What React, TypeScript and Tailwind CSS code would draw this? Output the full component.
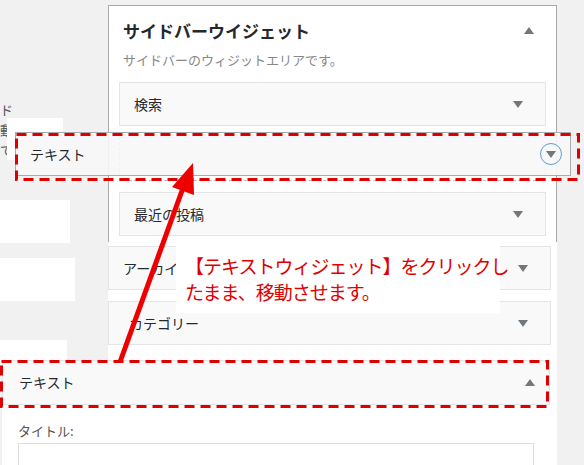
const font = { fontFamily: '"Noto Sans CJK JP", "Noto Sans", sans-serif' };

const Tri = ({ up }: { up?: boolean }) => (
  <svg width="10" height="7" viewBox="0 0 10 7" className="shrink-0">
    <path d={up ? "M0 7 L5 0 L10 7 Z" : "M0 0 L10 0 L5 7 Z"} fill="#72777c" />
  </svg>
);

const Row = ({ label, className = "" }: { label: string; className?: string }) => (
  <div className={`h-[44px] border border-[#e5e5e5] bg-[#f9f9f9] flex items-center justify-between pl-[14px] pr-[22px] text-[14px] text-[#23282d] ${className}`}>
    <span>{label}</span>
    <Tri />
  </div>
);

export default function App() {
  return (
    <div className="relative w-[584px] h-[465px] overflow-hidden bg-[#f1f1f1]" style={font}>
      <div className="flex h-full">
        {/* left column fragments */}
        <div className="w-[108px] shrink-0 relative">
          <div className="absolute left-0 top-[100px] text-[13px] leading-[20px] text-[#555]">
            <div>ド</div><div>動</div><div>て</div>
          </div>
          <div className="absolute left-[7px] top-[118px] w-[56px] h-[42px] bg-white" />
          <div className="absolute left-0 top-[200px] w-[70px] h-[43px] bg-white" />
          <div className="absolute left-0 top-[258px] w-[75px] h-[43px] bg-white" />
          <div className="absolute left-0 top-[340px] w-[67px] h-[30px] bg-white" />
        </div>
        {/* sidebar panel */}
        <div className="w-[449px] mt-[5px] flex flex-col">
          <div className="border border-[#aaa] border-b-0 bg-white px-[10px] pb-[6px]">
            <div className="flex items-center justify-between pl-[4px] pr-[12px] pt-[12px]">
              <span className="text-[17px] font-bold text-[#23282d]">サイドバーウイジェット</span>
              <Tri up />
            </div>
            <div className="pl-[4px] mt-[6px] text-[13px] text-[#888]">サイドバーのウィジットエリアです。</div>
            <Row label="検索" className="mt-[13px]" />
            <div className="h-[44px] my-[11px] border border-dashed border-[#bbb]" />
            <Row label="最近の投稿" />
          </div>
          <div className="bg-white flex-1 pt-[4px] pr-[6px]">
            <Row label="アーカイブ" />
            <Row label="カテゴリー" className="mt-[11px] pl-[20px]" />
          </div>
        </div>
      </div>

      {/* dragged widget */}
      <div className="absolute left-[15px] top-[132px] w-[556px] h-[44px] border border-[#aaa] bg-[#f7f7f7]/90 flex items-center justify-between pl-[14px] pr-[8px] text-[14px] text-[#23282d]">
        <span>テキスト</span>
        <div className="w-[22px] h-[22px] rounded-full border border-[#5b9dd9] flex items-center justify-center">
          <Tri />
        </div>
      </div>

      {/* bottom text widget */}
      <div className="absolute left-[2px] top-[360px] w-[548px] bg-white">
        <div className="h-[45px] bg-[#f9f9f9] border border-[#e5e5e5] flex items-center justify-between pl-[16px] pr-[14px] text-[14px] text-[#23282d]">
          <span>テキスト</span>
          <Tri up />
        </div>
        <div className="px-[16px] pt-[16px] text-[13px] text-[#555]">タイトル:</div>
        <div className="mx-[16px] mt-[2px] h-[40px] border border-[#ddd]" />
      </div>

      {/* annotation */}
      <div className="absolute left-[176px] top-[246px] w-[324px] h-[67px] bg-white pl-[9px] pt-[7px] text-[19px] leading-[26px] text-[#e00000] tracking-[-1px] whitespace-nowrap">
        <div>【テキストウィジェット】をクリックし</div>
        <div>たまま、移動させます。</div>
      </div>

      {/* red dashed frames and arrow */}
      <svg className="absolute left-0 top-0" width="584" height="465">
        <rect x="16.5" y="134.5" width="562" height="45" fill="none" stroke="#dd0000" strokeWidth="3" strokeDasharray="10 6" />
        <rect x="1.5" y="361.5" width="546" height="45" fill="none" stroke="#dd0000" strokeWidth="3" strokeDasharray="10 6" />
        <line x1="120" y1="362" x2="183" y2="188" stroke="#ee0000" strokeWidth="5" />
        <polygon points="193,163 194,195 172,187" fill="#ee0000" />
      </svg>
    </div>
  );
}
